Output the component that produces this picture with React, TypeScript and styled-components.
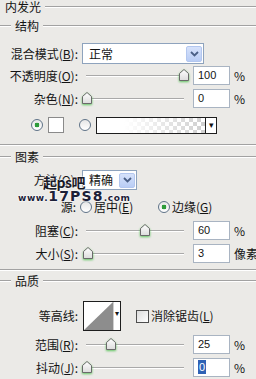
import React from "react";
import styled, { createGlobalStyle } from "styled-components";

const GlobalStyle = createGlobalStyle`
  html, body {
    margin: 0;
    padding: 0;
    background: #ebeae7;
  }
  body {
    font-family: "Noto Sans CJK SC", "Liberation Sans", sans-serif;
    font-size: 12px;
    color: #141414;
  }
  u {
    text-decoration-thickness: 1px;
    text-underline-offset: 1px;
  }
`;

const App = () => {
  return (
    <>
      <GlobalStyle />
      <Panel>
        <Legend $mt={0}>
          <LegendText $pad={5}>内发光</LegendText>
          <Etch />
        </Legend>

        <Legend $mt={5}>
          <LeadLine />
          <LegendText $pad={4}>结构</LegendText>
          <Etch />
        </Legend>

        <Field $mt={10} $h={21}>
          <Label>
            混合模式(<u>B</u>):
          </Label>
          <Select $w={122}>
            <SelectText>正常</SelectText>
            <ArrowButton>
              <Chevron />
            </ArrowButton>
          </Select>
        </Field>

        <Field $mt={2} $h={19}>
          <Label>
            不透明度(<u>O</u>):
          </Label>
          <SliderSet value={100} text="100" unit="%" />
        </Field>

        <Field $mt={4} $h={19}>
          <Label>
            杂色(<u>N</u>):
          </Label>
          <SliderSet value={0} text="0" unit="%" />
        </Field>

        <ColorRow>
          <Radio $on />
          <Swatch />
          <Radio $gap={15} />
          <GradientBox>
            <GradientFill />
            <SmallArrow>▾</SmallArrow>
          </GradientBox>
        </ColorRow>

        <Separator $mt={10} />

        <Legend $mt={4}>
          <LeadLine />
          <LegendText $pad={4}>图素</LegendText>
          <Etch />
        </Legend>

        <Field $mt={6} $h={20}>
          <Label>
            方法(<u>Q</u>):
          </Label>
          <Select $w={55}>
            <SelectText>精确</SelectText>
            <ArrowButton>
              <Chevron />
            </ArrowButton>
          </Select>
        </Field>

        <Field $mt={10} $h={14}>
          <Label $pr={4}>源:</Label>
          <Options>
            <Option $w={78}>
              <Radio />
              <OptionText>
                居中(<u>E</u>)
              </OptionText>
            </Option>
            <Option>
              <Radio $on />
              <OptionText>
                边缘(<u>G</u>)
              </OptionText>
            </Option>
          </Options>
        </Field>

        <Field $mt={7} $h={19}>
          <Label>
            阻塞(<u>C</u>):
          </Label>
          <SliderSet value={60} text="60" unit="%" />
        </Field>

        <Field $mt={4} $h={19}>
          <Label>
            大小(<u>S</u>):
          </Label>
          <SliderSet value={1} text="3" unit="像素" />
        </Field>

        <Separator $mt={6} />

        <Legend $mt={3}>
          <LeadLine />
          <LegendText $pad={4}>品质</LegendText>
          <Etch />
        </Legend>

        <Field $mt={13} $h={30}>
          <Label>等高线:</Label>
          <ContourRow>
            <ContourBox>
              <ContourCurve viewBox="0 0 30 28" preserveAspectRatio="none">
                <polygon points="0,28 30,0 30,28" fill="#8d8d8d" />
              </ContourCurve>
              <ContourArrow>▾</ContourArrow>
            </ContourBox>
            <Check />
            <OptionText>
              消除锯齿(<u>L</u>)
            </OptionText>
          </ContourRow>
        </Field>

        <Field $mt={4} $h={19}>
          <Label>
            范围(<u>R</u>):
          </Label>
          <SliderSet value={25} text="25" unit="%" />
        </Field>

        <Field $mt={4} $h={19}>
          <Label>
            抖动(<u>J</u>):
          </Label>
          <SliderSet value={0} text="0" unit="%" selected />
        </Field>

        <MarkCn>起ps吧</MarkCn>
        <MarkUrl>
          <small>www.</small>17PS8<small>.com</small>
        </MarkUrl>
      </Panel>
    </>
  );
};

export default App;

type SliderProps = {
  value: number;
  text: string;
  unit: string;
  selected?: boolean;
};

const SliderSet = ({ value, text, unit, selected }: SliderProps) => {
  return (
    <SliderWrap>
      <Track>
        <Thumb style={{ left: Math.round((value / 100) * 97) - 4 }}>
          <svg width="10" height="12" viewBox="0 0 10 12">
            <defs>
              <linearGradient id="tg" x1="0" y1="0" x2="0" y2="1">
                <stop offset="0" stopColor="#ffffff" />
                <stop offset="1" stopColor="#dcdcdc" />
              </linearGradient>
            </defs>
            <polygon
              points="0.5,4.5 5,0.5 9.5,4.5 9.5,11.5 0.5,11.5"
              fill="url(#tg)"
              stroke="#6a6a6a"
              strokeWidth="1"
            />
          </svg>
        </Thumb>
      </Track>
      <NumBox>
        {selected ? <Picked>{text}</Picked> : text}
      </NumBox>
      <Unit>{unit}</Unit>
    </SliderWrap>
  );
};

const Chevron = () => (
  <svg width="9" height="6" viewBox="0 0 9 6">
    <polyline
      points="1,1 4.5,4.5 8,1"
      fill="none"
      stroke="#4a5f86"
      strokeWidth="1.8"
    />
  </svg>
);

const Panel = styled.div`
  position: relative;
  width: 256px;
  height: 379px;
  overflow: hidden;
  display: flex;
  flex-direction: column;
  background: #ebeae7;
`;

const Legend = styled.div<{ $mt: number }>`
  display: flex;
  align-items: center;
  height: 14px;
  margin-top: ${(p) => p.$mt}px;
`;

const LegendText = styled.div<{ $pad: number }>`
  padding: 0 4px 0 ${(p) => p.$pad}px;
  line-height: 14px;
  font-size: 12px;
`;

const Etch = styled.div`
  flex: 1;
  height: 0;
  border-top: 1px solid #a2a2a2;
  border-bottom: 1px solid #ffffff;
`;

const LeadLine = styled(Etch)`
  flex: none;
  width: 11px;
`;

const Separator = styled(Etch)<{ $mt: number }>`
  flex: none;
  margin-top: ${(p) => p.$mt}px;
`;

const Field = styled.div<{ $mt: number; $h: number }>`
  display: grid;
  grid-template-columns: 80px 1fr;
  align-items: center;
  height: ${(p) => p.$h}px;
  margin-top: ${(p) => p.$mt}px;
`;

const Label = styled.div<{ $pr?: number }>`
  text-align: right;
  padding-right: ${(p) => p.$pr ?? 2}px;
  white-space: nowrap;
  line-height: 14px;
`;

const Select = styled.div<{ $w: number }>`
  margin-left: 2px;
  width: ${(p) => p.$w}px;
  height: 100%;
  box-sizing: border-box;
  border: 1px solid #8ea3bd;
  background: #fff;
  display: flex;
  align-items: center;
  justify-content: space-between;
  padding: 0 1px 0 6px;
`;

const SelectText = styled.span`
  line-height: 14px;
`;

const ArrowButton = styled.div`
  width: 16px;
  height: calc(100% - 3px);
  border-radius: 2px;
  background: linear-gradient(#d6e2fb, #b9cdf5);
  border: 1px solid #b3c7ef;
  box-sizing: border-box;
  display: flex;
  align-items: center;
  justify-content: center;
`;

const SliderWrap = styled.div`
  display: flex;
  align-items: center;
  height: 100%;
`;

const Track = styled.div`
  position: relative;
  margin-left: 6px;
  width: 98px;
  height: 0;
  border-top: 1px solid #a9a9a9;
  border-bottom: 1px solid #ffffff;
`;

const Thumb = styled.div`
  position: absolute;
  top: -7px;
  width: 10px;
  height: 12px;
  filter: drop-shadow(0 1px 1px rgba(70, 190, 70, 0.85));

  svg {
    display: block;
  }
`;

const NumBox = styled.div`
  margin-left: 9px;
  width: 37px;
  height: 19px;
  box-sizing: border-box;
  border: 1px solid #a9b4c2;
  background: #fff;
  padding-left: 4px;
  font-family: "Liberation Sans", "DejaVu Sans", sans-serif;
  font-size: 11px;
  line-height: 17px;
`;

const Picked = styled.span`
  background: #2f62b5;
  color: #fff;
  padding: 1px 1px;
`;

const Unit = styled.div`
  margin-left: 4px;
  font-size: 12px;
  white-space: nowrap;
`;

const ColorRow = styled.div`
  display: flex;
  align-items: center;
  height: 18px;
  margin-top: 8px;
  padding-left: 31px;
`;

const Radio = styled.div<{ $on?: boolean; $gap?: number }>`
  flex: none;
  width: 12px;
  height: 12px;
  box-sizing: border-box;
  margin-left: ${(p) => p.$gap ?? 0}px;
  border: 1px solid #5f7388;
  border-radius: 50%;
  background: radial-gradient(
      circle at center,
      ${(p) => (p.$on ? "#2d9b3a 0 2.2px" : "transparent 0 0")},
      transparent 2.6px
    ),
    linear-gradient(#e6e6e6, #ffffff);
`;

const Swatch = styled.div`
  margin-left: 5px;
  width: 16px;
  height: 16px;
  box-sizing: border-box;
  border: 1px solid #8a8a8a;
  background: #fff;
`;

const GradientBox = styled.div`
  margin-left: 5px;
  width: 121px;
  height: 17px;
  box-sizing: border-box;
  border: 1px solid #1e1e1e;
  display: flex;
`;

const GradientFill = styled.div`
  flex: 1;
  background: linear-gradient(to right, #ffffff 25%, rgba(255, 255, 255, 0) 100%),
    repeating-conic-gradient(#cfcfcf 0 25%, #ffffff 0 50%) 0 0 / 8px 8px;
`;

const SmallArrow = styled.div`
  width: 10px;
  border-left: 1px solid #1e1e1e;
  background: #fff;
  font-size: 9px;
  line-height: 14px;
  text-align: center;
  color: #111;
`;

const Options = styled.div`
  display: flex;
  align-items: center;
`;

const Option = styled.div<{ $w?: number }>`
  display: flex;
  align-items: center;
  width: ${(p) => (p.$w ? `${p.$w}px` : "auto")};
`;

const OptionText = styled.span`
  margin-left: 2px;
  line-height: 14px;
  white-space: nowrap;
`;

const ContourRow = styled.div`
  display: flex;
  align-items: center;
  height: 100%;
`;

const ContourBox = styled.div`
  margin-left: 3px;
  width: 38px;
  height: 30px;
  box-sizing: border-box;
  border: 1px solid #1e1e1e;
  display: flex;
  background: #fff;
`;

const ContourCurve = styled.svg`
  width: 29px;
  height: 28px;
  display: block;
`;

const ContourArrow = styled.div`
  flex: 1;
  border-left: 1px solid #cfcfcf;
  font-size: 8px;
  line-height: 22px;
  text-align: center;
`;

const Check = styled.div`
  margin-left: 15px;
  width: 13px;
  height: 13px;
  box-sizing: border-box;
  border: 1px solid #4e4e4e;
  background: linear-gradient(135deg, #dcdcdc, #ffffff);
`;

const MarkCn = styled.div`
  position: absolute;
  left: 43px;
  top: 172px;
  font-size: 14px;
  font-weight: 700;
  color: #1b1b28;
  letter-spacing: -0.5px;
  text-shadow: 0 0 2px #fff, 0 0 2px #fff, 0 0 1px #fff;
`;

const MarkUrl = styled.div`
  position: absolute;
  left: 18px;
  top: 189px;
  font-family: "DejaVu Sans", "Liberation Sans", sans-serif;
  font-weight: 900;
  font-size: 14px;
  line-height: 14px;
  color: #1c2138;
  letter-spacing: 1.2px;
  text-shadow: 0 0 1px #fff, 0 0 2px #fff, 0 0 2px #fff;

  small {
    font-size: 9px;
    letter-spacing: 0.6px;
  }
`;
